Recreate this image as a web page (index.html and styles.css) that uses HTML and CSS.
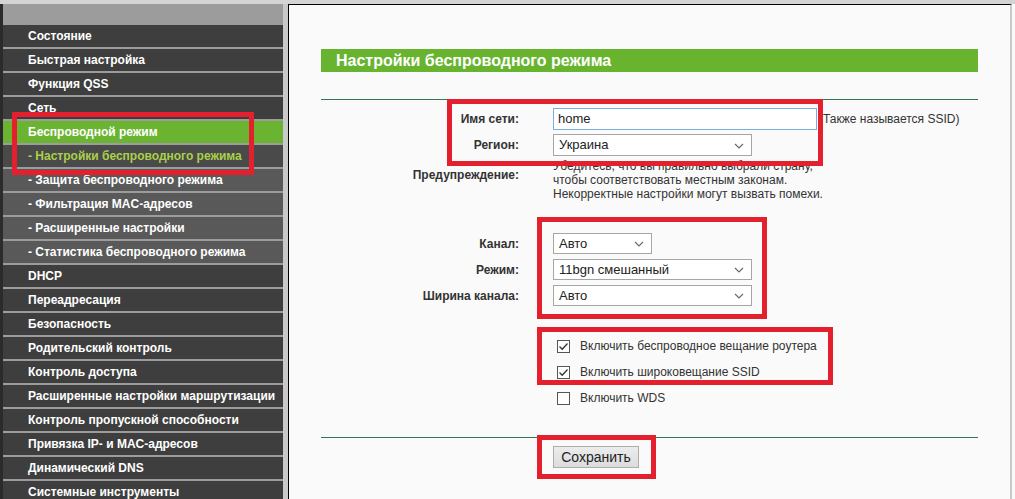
FILE: index.html
```html
<!DOCTYPE html>
<html lang="ru">
<head>
<meta charset="utf-8">
<title>Настройки беспроводного режима</title>
<link rel="stylesheet" href="styles.css">
</head>
<body>
<div class="topband"></div>
<div class="frame">
  <nav class="sidebar">
    <div class="item">Состояние</div>
    <div class="item">Быстрая настройка</div>
    <div class="item">Функция QSS</div>
    <div class="item">Сеть</div>
    <div class="item active">Беспроводной режим</div>
    <div class="item sub current">- Настройки беспроводного режима</div>
    <div class="item sub">- Защита беспроводного режима</div>
    <div class="item sub">- Фильтрация MAC-адресов</div>
    <div class="item sub">- Расширенные настройки</div>
    <div class="item sub">- Статистика беспроводного режима</div>
    <div class="item">DHCP</div>
    <div class="item">Переадресация</div>
    <div class="item">Безопасность</div>
    <div class="item">Родительский контроль</div>
    <div class="item">Контроль доступа</div>
    <div class="item">Расширенные настройки маршрутизации</div>
    <div class="item">Контроль пропускной способности</div>
    <div class="item">Привязка IP- и MAC-адресов</div>
    <div class="item">Динамический DNS</div>
    <div class="item">Системные инструменты</div>
  </nav>
  <div class="gutter"></div>
  <main class="content">
    <h1 class="title">Настройки беспроводного режима</h1>
    <div class="rule"></div>

    <div class="row row-name">
      <div class="label">Имя сети:</div>
      <div class="field">
        <div class="input">home</div>
        <span class="hint">Также называется SSID)</span>
      </div>
    </div>

    <div class="row row-region">
      <div class="label">Регион:</div>
      <div class="field">
        <div class="select wide">Украина<svg class="chev" width="10" height="6" viewBox="0 0 10 6"><path d="M1 1 L5 5 L9 1" fill="none" stroke="#6a6a6a" stroke-width="1.2"/></svg></div>
      </div>
    </div>

    <div class="row row-warn">
      <div class="label warn-label">Предупреждение:</div>
      <div class="field warn-text">Убедитесь, что вы правильно выбрали страну,<br>чтобы соответствовать местным законам.<br>Некорректные настройки могут вызвать помехи.</div>
    </div>

    <div class="row row-channel">
      <div class="label">Канал:</div>
      <div class="field">
        <div class="select narrow">Авто<svg class="chev" width="10" height="6" viewBox="0 0 10 6"><path d="M1 1 L5 5 L9 1" fill="none" stroke="#6a6a6a" stroke-width="1.2"/></svg></div>
      </div>
    </div>

    <div class="row row-sel">
      <div class="label">Режим:</div>
      <div class="field">
        <div class="select wide">11bgn смешанный<svg class="chev" width="10" height="6" viewBox="0 0 10 6"><path d="M1 1 L5 5 L9 1" fill="none" stroke="#6a6a6a" stroke-width="1.2"/></svg></div>
      </div>
    </div>

    <div class="row row-sel">
      <div class="label">Ширина канала:</div>
      <div class="field">
        <div class="select wide">Авто<svg class="chev" width="10" height="6" viewBox="0 0 10 6"><path d="M1 1 L5 5 L9 1" fill="none" stroke="#6a6a6a" stroke-width="1.2"/></svg></div>
      </div>
    </div>

    <div class="checks">
      <div class="row row-check">
        <div class="label"></div>
        <div class="field">
          <span class="box"><svg width="11" height="11" viewBox="0 0 11 11"><path d="M1.5 5.5 L4.2 8.2 L9.5 2.5" fill="none" stroke="#333" stroke-width="1.3"/></svg></span>
          <span class="ctext">Включить беспроводное вещание роутера</span>
        </div>
      </div>
      <div class="row row-check">
        <div class="label"></div>
        <div class="field">
          <span class="box"><svg width="11" height="11" viewBox="0 0 11 11"><path d="M1.5 5.5 L4.2 8.2 L9.5 2.5" fill="none" stroke="#333" stroke-width="1.3"/></svg></span>
          <span class="ctext">Включить широковещание SSID</span>
        </div>
      </div>
      <div class="row row-check">
        <div class="label"></div>
        <div class="field">
          <span class="box"></span>
          <span class="ctext">Включить WDS</span>
        </div>
      </div>
    </div>

    <div class="rule rule2"></div>
    <div class="actions">
      <button class="btn" type="button">Сохранить</button>
    </div>
  </main>
</div>

<div class="mark m1"></div>
<div class="mark m2"></div>
<div class="mark m3"></div>
<div class="mark m4"></div>
<div class="mark m5"></div>
</body>
</html>
```

FILE: styles.css
```css
html, body {
  margin: 0;
  padding: 0;
}
body {
  width: 1015px;
  height: 499px;
  overflow: hidden;
  background: #fafafa;
  font-family: "Liberation Sans", Arial, sans-serif;
  position: relative;
}
.topband {
  height: 4px;
  background: #d4d4d4;
}
.frame {
  display: flex;
  height: 495px;
}
.sidebar {
  flex: none;
  width: 280px;
  border-left: 3px solid #2b2b2b;
  background: #9c9c9c;
  padding-top: 21px;
  display: flex;
  flex-direction: column;
  gap: 2px;
}
.item {
  flex: none;
  height: 22px;
  line-height: 23px;
  padding-left: 25px;
  background: #3e3e3e;
  color: #fff;
  font-size: 12px;
  font-weight: bold;
  white-space: nowrap;
}
.item.sub {
  background: #595959;
}
.item.active {
  background: #6bb431;
}
.item.sub.current {
  background: #4a4a4a;
  color: #a9d148;
}
.gutter {
  flex: none;
  width: 5px;
  background: #c9c9c9;
}
.content {
  flex: none;
  width: 657px;
  border-top: 1px solid #000;
  border-left: 1px solid #000;
  border-right: 2px solid #c9c9c9;
  background: #fafafa;
  padding: 44px 32px 0 32px;
  color: #333;
}
.title {
  margin: 0;
  height: 23px;
  line-height: 23px;
  background: #68b42f;
  color: #fff;
  font-size: 16px;
  font-weight: bold;
  padding-left: 15px;
}
.rule {
  height: 1px;
  background: #2f7a52;
  margin-top: 27px;
}
.row {
  display: flex;
  column-gap: 34px;
  align-items: center;
}
.label {
  flex: none;
  width: 198px;
  text-align: right;
  font-size: 12px;
  font-weight: bold;
  color: #333;
}
.field {
  display: flex;
  align-items: center;
  font-size: 12px;
}
.row-name {
  margin-top: 8px;
  height: 22px;
}
.input {
  box-sizing: border-box;
  width: 264px;
  height: 22px;
  border: 1px solid #7aaee3;
  background: #fff;
  font-size: 13px;
  line-height: 20px;
  padding-left: 4px;
  color: #222;
}
.hint {
  margin-left: 6px;
  color: #333;
  font-size: 12px;
}
.row-region {
  margin-top: 4px;
  height: 22px;
}
.select {
  box-sizing: border-box;
  position: relative;
  height: 22px;
  border: 1px solid #a6a6a6;
  background: #fff;
  font-size: 13px;
  line-height: 20px;
  padding-left: 5px;
  color: #222;
}
.select.wide {
  width: 199px;
}
.select.narrow {
  width: 99px;
}
.chev {
  position: absolute;
  right: 7px;
  top: 8px;
}
.row-warn {
  margin-top: 3px;
  align-items: flex-start;
}
.warn-label {
  padding-top: 9px;
  line-height: 14px;
}
.warn-text {
  display: block;
  line-height: 14px;
  color: #333;
}
.row-channel {
  margin-top: 32px;
  height: 21px;
}
.row-channel .select,
.row-sel .select {
  height: 21px;
  line-height: 19px;
}
.row-channel .chev,
.row-sel .chev {
  top: 7px;
}
.row-sel {
  margin-top: 5px;
  height: 21px;
}
.checks {
  margin-top: 27px;
}
.row-check {
  height: 26px;
}
.box {
  box-sizing: border-box;
  width: 13px;
  height: 13px;
  margin-left: 4px;
  border: 1px solid #555;
  background: #fff;
  display: flex;
  align-items: center;
  justify-content: center;
}
.ctext {
  margin-left: 10px;
  font-size: 12px;
  color: #333;
}
.rule2 {
  margin-top: 26px;
}
.actions {
  padding-left: 232px;
  margin-top: 8px;
}
.btn {
  box-sizing: border-box;
  width: 86px;
  height: 22px;
  border: 1px solid #adadad;
  background: linear-gradient(#ececec, #dcdcdc);
  font-family: "Liberation Sans", Arial, sans-serif;
  font-size: 14px;
  color: #222;
  padding: 0;
  line-height: 20px;
}
.mark {
  position: absolute;
  box-sizing: border-box;
  border: 5px solid #e5202e;
  pointer-events: none;
}
.m1 { left: 447px; top: 99px; width: 376px; height: 67px; }
.m2 { left: 537px; top: 217px; width: 230px; height: 102px; }
.m3 { left: 537px; top: 327px; width: 296px; height: 58px; }
.m4 { left: 537px; top: 435px; width: 119px; height: 44px; }
.m5 { left: 12px; top: 112px; width: 242px; height: 63px; }
```
